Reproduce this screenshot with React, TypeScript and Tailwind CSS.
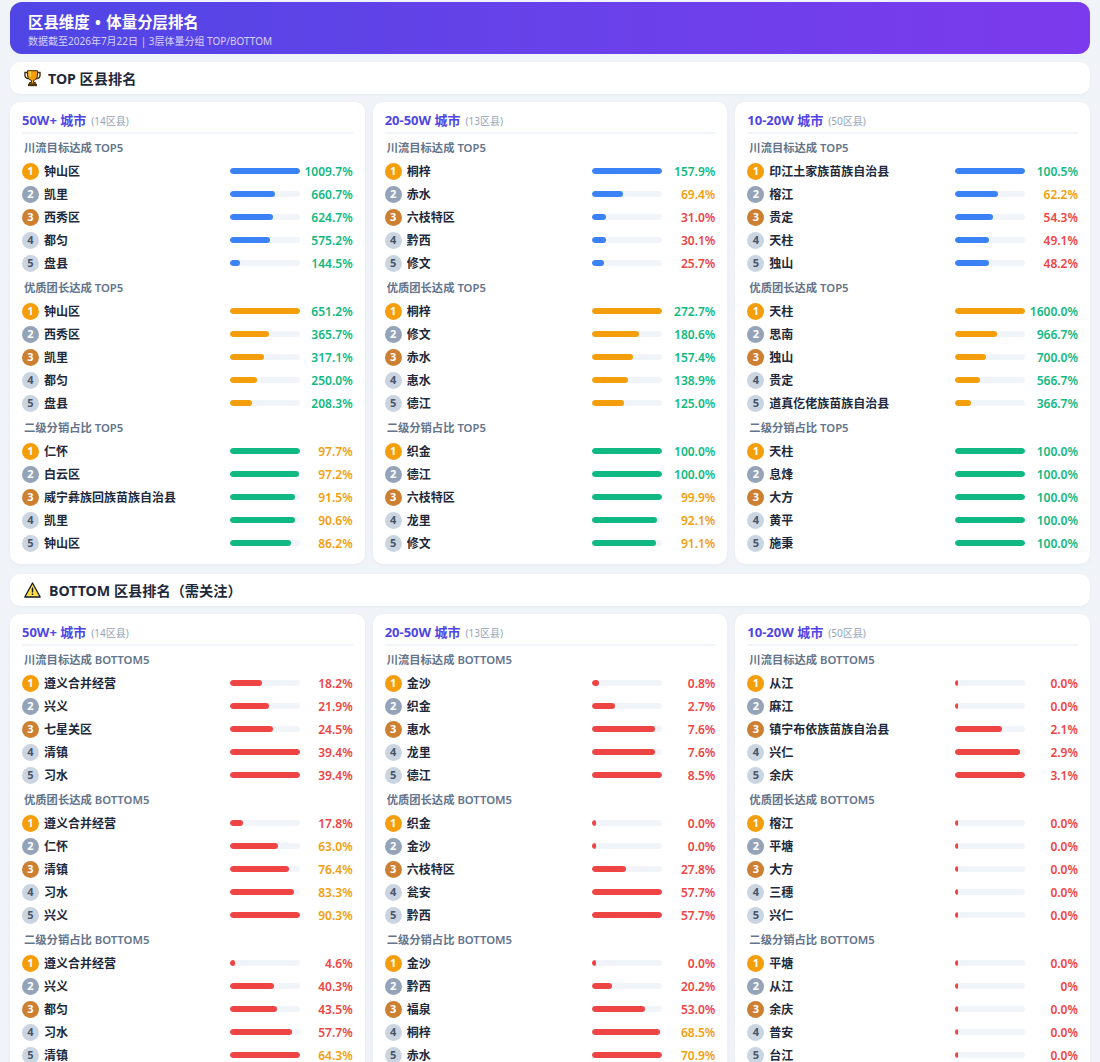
import React from 'react';

type Row = [string, number, string?];
type Group = { title: string; color: string; rows: Row[] };
type Card = { title: string; sub: string; groups: Group[] };

const BLUE = 'bg-[#3b82f6]';
const AMBER = 'bg-[#f59e0b]';
const GREEN = 'bg-[#10b981]';
const RED = 'bg-[#ef4444]';

const g = (title: string, color: string, s: string): Group => ({
  title,
  color,
  rows: s.split(' ').map((p) => {
    const [n, v] = p.split(':');
    return [n, parseFloat(v), v] as Row;
  }),
});

const top: Card[] = [
  {
    title: '50W+ 城市',
    sub: '(14区县)',
    groups: [
      g('川流目标达成 TOP5', BLUE, '钟山区:1009.7 凯里:660.7 西秀区:624.7 都匀:575.2 盘县:144.5'),
      g('优质团长达成 TOP5', AMBER, '钟山区:651.2 西秀区:365.7 凯里:317.1 都匀:250.0 盘县:208.3'),
      g('二级分销占比 TOP5', GREEN, '仁怀:97.7 白云区:97.2 威宁彝族回族苗族自治县:91.5 凯里:90.6 钟山区:86.2'),
    ],
  },
  {
    title: '20-50W 城市',
    sub: '(13区县)',
    groups: [
      g('川流目标达成 TOP5', BLUE, '桐梓:157.9 赤水:69.4 六枝特区:31.0 黔西:30.1 修文:25.7'),
      g('优质团长达成 TOP5', AMBER, '桐梓:272.7 修文:180.6 赤水:157.4 惠水:138.9 德江:125.0'),
      g('二级分销占比 TOP5', GREEN, '织金:100.0 德江:100.0 六枝特区:99.9 龙里:92.1 修文:91.1'),
    ],
  },
  {
    title: '10-20W 城市',
    sub: '(50区县)',
    groups: [
      g('川流目标达成 TOP5', BLUE, '印江土家族苗族自治县:100.5 榕江:62.2 贵定:54.3 天柱:49.1 独山:48.2'),
      g('优质团长达成 TOP5', AMBER, '天柱:1600.0 思南:966.7 独山:700.0 贵定:566.7 道真仡佬族苗族自治县:366.7'),
      g('二级分销占比 TOP5', GREEN, '天柱:100.0 息烽:100.0 大方:100.0 黄平:100.0 施秉:100.0'),
    ],
  },
];

const bottom: Card[] = [
  {
    title: '50W+ 城市',
    sub: '(14区县)',
    groups: [
      g('川流目标达成 BOTTOM5', RED, '遵义合并经营:18.2 兴义:21.9 七星关区:24.5 清镇:39.4 习水:39.4'),
      g('优质团长达成 BOTTOM5', RED, '遵义合并经营:17.8 仁怀:63.0 清镇:76.4 习水:83.3 兴义:90.3'),
      g('二级分销占比 BOTTOM5', RED, '遵义合并经营:4.6 兴义:40.3 都匀:43.5 习水:57.7 清镇:64.3'),
    ],
  },
  {
    title: '20-50W 城市',
    sub: '(13区县)',
    groups: [
      g('川流目标达成 BOTTOM5', RED, '金沙:0.8 织金:2.7 惠水:7.6 龙里:7.6 德江:8.5'),
      g('优质团长达成 BOTTOM5', RED, '织金:0.0 金沙:0.0 六枝特区:27.8 瓮安:57.7 黔西:57.7'),
      g('二级分销占比 BOTTOM5', RED, '金沙:0.0 黔西:20.2 福泉:53.0 桐梓:68.5 赤水:70.9'),
    ],
  },
  {
    title: '10-20W 城市',
    sub: '(50区县)',
    groups: [
      g('川流目标达成 BOTTOM5', RED, '从江:0.0 麻江:0.0 镇宁布依族苗族自治县:2.1 兴仁:2.9 余庆:3.1'),
      g('优质团长达成 BOTTOM5', RED, '榕江:0.0 平塘:0.0 大方:0.0 三穗:0.0 兴仁:0.0'),
      g('二级分销占比 BOTTOM5', RED, '平塘:0.0 从江:0 余庆:0.0 普安:0.0 台江:0.0'),
    ],
  },
];

const badge = [
  'bg-[#f59e0b] text-white',
  'bg-[#94a3b8] text-white',
  'bg-[#cd7f32] text-white',
  'bg-[#cbd5e1] text-[#475569]',
  'bg-[#cbd5e1] text-[#475569]',
];

function valueColor(v: number) {
  if (v >= 100) return 'text-[#10b981]';
  if (v >= 60) return 'text-[#f59e0b]';
  return 'text-[#ef4444]';
}

function GroupBlock({ group }: { group: Group }) {
  const max = Math.max(...group.rows.map((r) => r[1]));
  return (
    <div>
      <div className="h-[25px] pt-[4px] pl-[2px] text-[11.3px] leading-[18px] font-semibold text-[#64748b]">{group.title}</div>
      {group.rows.map((r, i) => (
        <div key={i} className="flex h-[23px] items-center">
          <span className={`flex h-[17px] w-[17px] shrink-0 items-center justify-center rounded-full text-[11px] font-bold ${badge[i]}`}>
            {i + 1}
          </span>
          <span className="ml-[5px] flex-1 truncate text-[12px] font-semibold text-[#1e293b]">{r[0]}</span>
          <div className="mb-[1px] h-[6px] w-[70px] shrink-0 overflow-hidden rounded-[3px] bg-[#f1f5f9]">
            <div className={`h-full rounded-[3px] ${group.color}`} style={{ width: `${max > 0 ? Math.max((r[1] / max) * 100, 5) : 5}%` }} />
          </div>
          <span className={`w-[53px] shrink-0 text-right text-[12px] font-semibold ${valueColor(r[1])}`}>{r[2]}%</span>
        </div>
      ))}
    </div>
  );
}

function CardBlock({ card }: { card: Card }) {
  return (
    <div className="rounded-[10px] bg-white px-[12px] pt-[9px] pb-[9px] shadow-[0_1px_4px_rgba(0,0,0,0.04)]">
      <div className="flex h-[23px] items-baseline gap-[5px] border-b-2 border-[#f1f5f9] text-[13px] leading-[18px] font-bold text-[#4f46e5]">
        {card.title}
        <span className="text-[10px] font-normal text-[#94a3b8]">{card.sub}</span>
      </div>
      <div className="mt-[1px] flex flex-col">
        {card.groups.map((gr, i) => (
          <GroupBlock key={i} group={gr} />
        ))}
      </div>
    </div>
  );
}

function Trophy() {
  return (
    <svg width="17" height="17" viewBox="0 0 17 17" className="shrink-0">
      <path d="M4 2.500H1V5.500C1 7.500 2.500 8.500 5 8.700M13 2.500H16V5.500C16 7.500 14.500 8.500 12 8.700" fill="none" stroke="#3f2d0c" strokeWidth="1.400" />
      <path d="M3.500.7H13.500V5C13.500 8 11.500 10 9.500 10.500V12.500H11.500V13.800H5.500V12.500H7.500V10.500C5.500 10 3.500 8 3.500 5Z" fill="#f59e0b" stroke="#3f2d0c" strokeWidth="1" />
      <path d="M5 1.500H7V7.500C5.800 6.500 5 5 5 3Z" fill="#fcd34d" />
      <rect x="4" y="13.800" width="9" height="2.400" fill="#4b3510" />
    </svg>
  );
}

function Warning() {
  return (
    <svg width="17" height="16" viewBox="0 0 17 16" className="shrink-0">
      <path d="M8.500 1 16.200 15H.8Z" fill="#fde047" stroke="#111827" strokeWidth="1.300" strokeLinejoin="round" />
      <rect x="7.800" y="5.500" width="1.400" height="5" fill="#111827" />
      <rect x="7.800" y="11.500" width="1.400" height="1.500" fill="#111827" />
    </svg>
  );
}

function Section({ icon, title, gap, cards }: { icon: React.ReactNode; title: string; gap: string; cards: Card[] }) {
  return (
    <>
      <div className={`flex h-[32px] items-center rounded-[10px] bg-white pl-[14px] text-[14.2px] font-bold text-[#1e293b] shadow-[0_1px_3px_rgba(0,0,0,0.04)] ${gap}`}>
        {icon}
        <span className="pt-[2px]">{title}</span>
      </div>
      <div className="mt-[8px] grid grid-cols-3 gap-[8px]">
        {cards.map((c, i) => (
          <CardBlock key={i} card={c} />
        ))}
      </div>
    </>
  );
}

export default function App() {
  return (
    <div className="min-h-screen bg-[#f0f4f8] px-[10px] pt-[2px] pb-[10px] font-['Noto_Sans','Noto_Sans_CJK_SC',sans-serif]">
      <div className="flex h-[52px] flex-col justify-center rounded-[12px] bg-gradient-to-r from-[#4f46e5] to-[#7c3aed] pt-[4px] pl-[18px] text-white">
        <div className="text-[15.4px] leading-[22px] font-bold [word-spacing:1.500px]">区县维度 • 体量分层排名</div>
        <div className="text-[10px] leading-[14px] opacity-75">数据截至2026年7月22日 | 3层体量分组 TOP/BOTTOM</div>
      </div>
      <div className="mt-[8px]">
        <Section icon={<Trophy />} title="TOP 区县排名" gap="gap-[7px]" cards={top} />
      </div>
      <div className="mt-[10px]">
        <Section icon={<Warning />} title="BOTTOM 区县排名（需关注）" gap="gap-[8px]" cards={bottom} />
      </div>
    </div>
  );
}
